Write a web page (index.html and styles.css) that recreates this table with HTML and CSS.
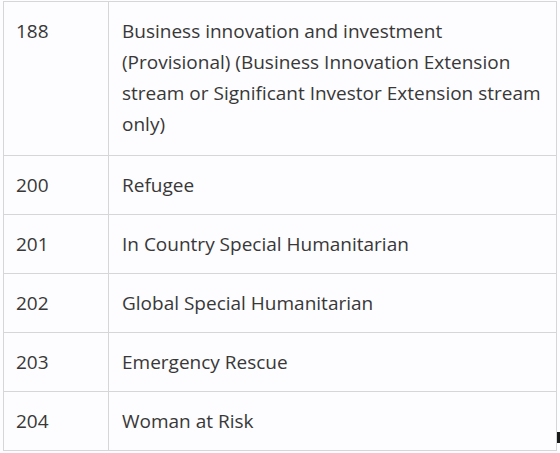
FILE: index.html
```html
<!DOCTYPE html>
<html>
<head>
<meta charset="utf-8">
<link rel="stylesheet" href="styles.css">
</head>
<body>
<table class="visa-table">
  <tbody>
    <tr class="row-tall"><td class="code">188</td><td class="name">Business innovation and investment (Provisional) (Business Innovation Extension stream or Significant Investor Extension stream only)</td></tr>
    <tr><td class="code">200</td><td class="name">Refugee</td></tr>
    <tr><td class="code">201</td><td class="name">In Country Special Humanitarian</td></tr>
    <tr><td class="code">202</td><td class="name">Global Special Humanitarian</td></tr>
    <tr><td class="code">203</td><td class="name">Emergency Rescue</td></tr>
    <tr><td class="code">204</td><td class="name">Woman at Risk</td></tr>
  </tbody>
</table>
<span class="cursor-mark"></span>
</body>
</html>
```
FILE: styles.css
```css
html, body {
  margin: 0;
  padding: 0;
  background: #fdfcfe;
}
body {
  width: 560px;
  height: 453px;
  overflow: hidden;
  position: relative;
  font-family: "Open Sans", "Noto Sans", sans-serif;
  color: #383838;
}
.visa-table {
  border-collapse: collapse;
  margin: 1px 0 0 3px;
  width: 554px;
  font-size: 19px;
  line-height: 31px;
  table-layout: fixed;
}
.visa-table td {
  border: 1px solid #d6d5d8;
  vertical-align: top;
  padding: 14px 12px 13px 12px;
}
.visa-table .code {
  width: 80px;
}
.visa-table .name {
  padding-left: 13px;
  padding-right: 10px;
}
.visa-table .row-tall td {
  padding-bottom: 15px;
}
.cursor-mark {
  position: absolute;
  left: 557px;
  top: 432px;
  width: 3px;
  height: 11px;
  background: #1a1a1a;
}
```
